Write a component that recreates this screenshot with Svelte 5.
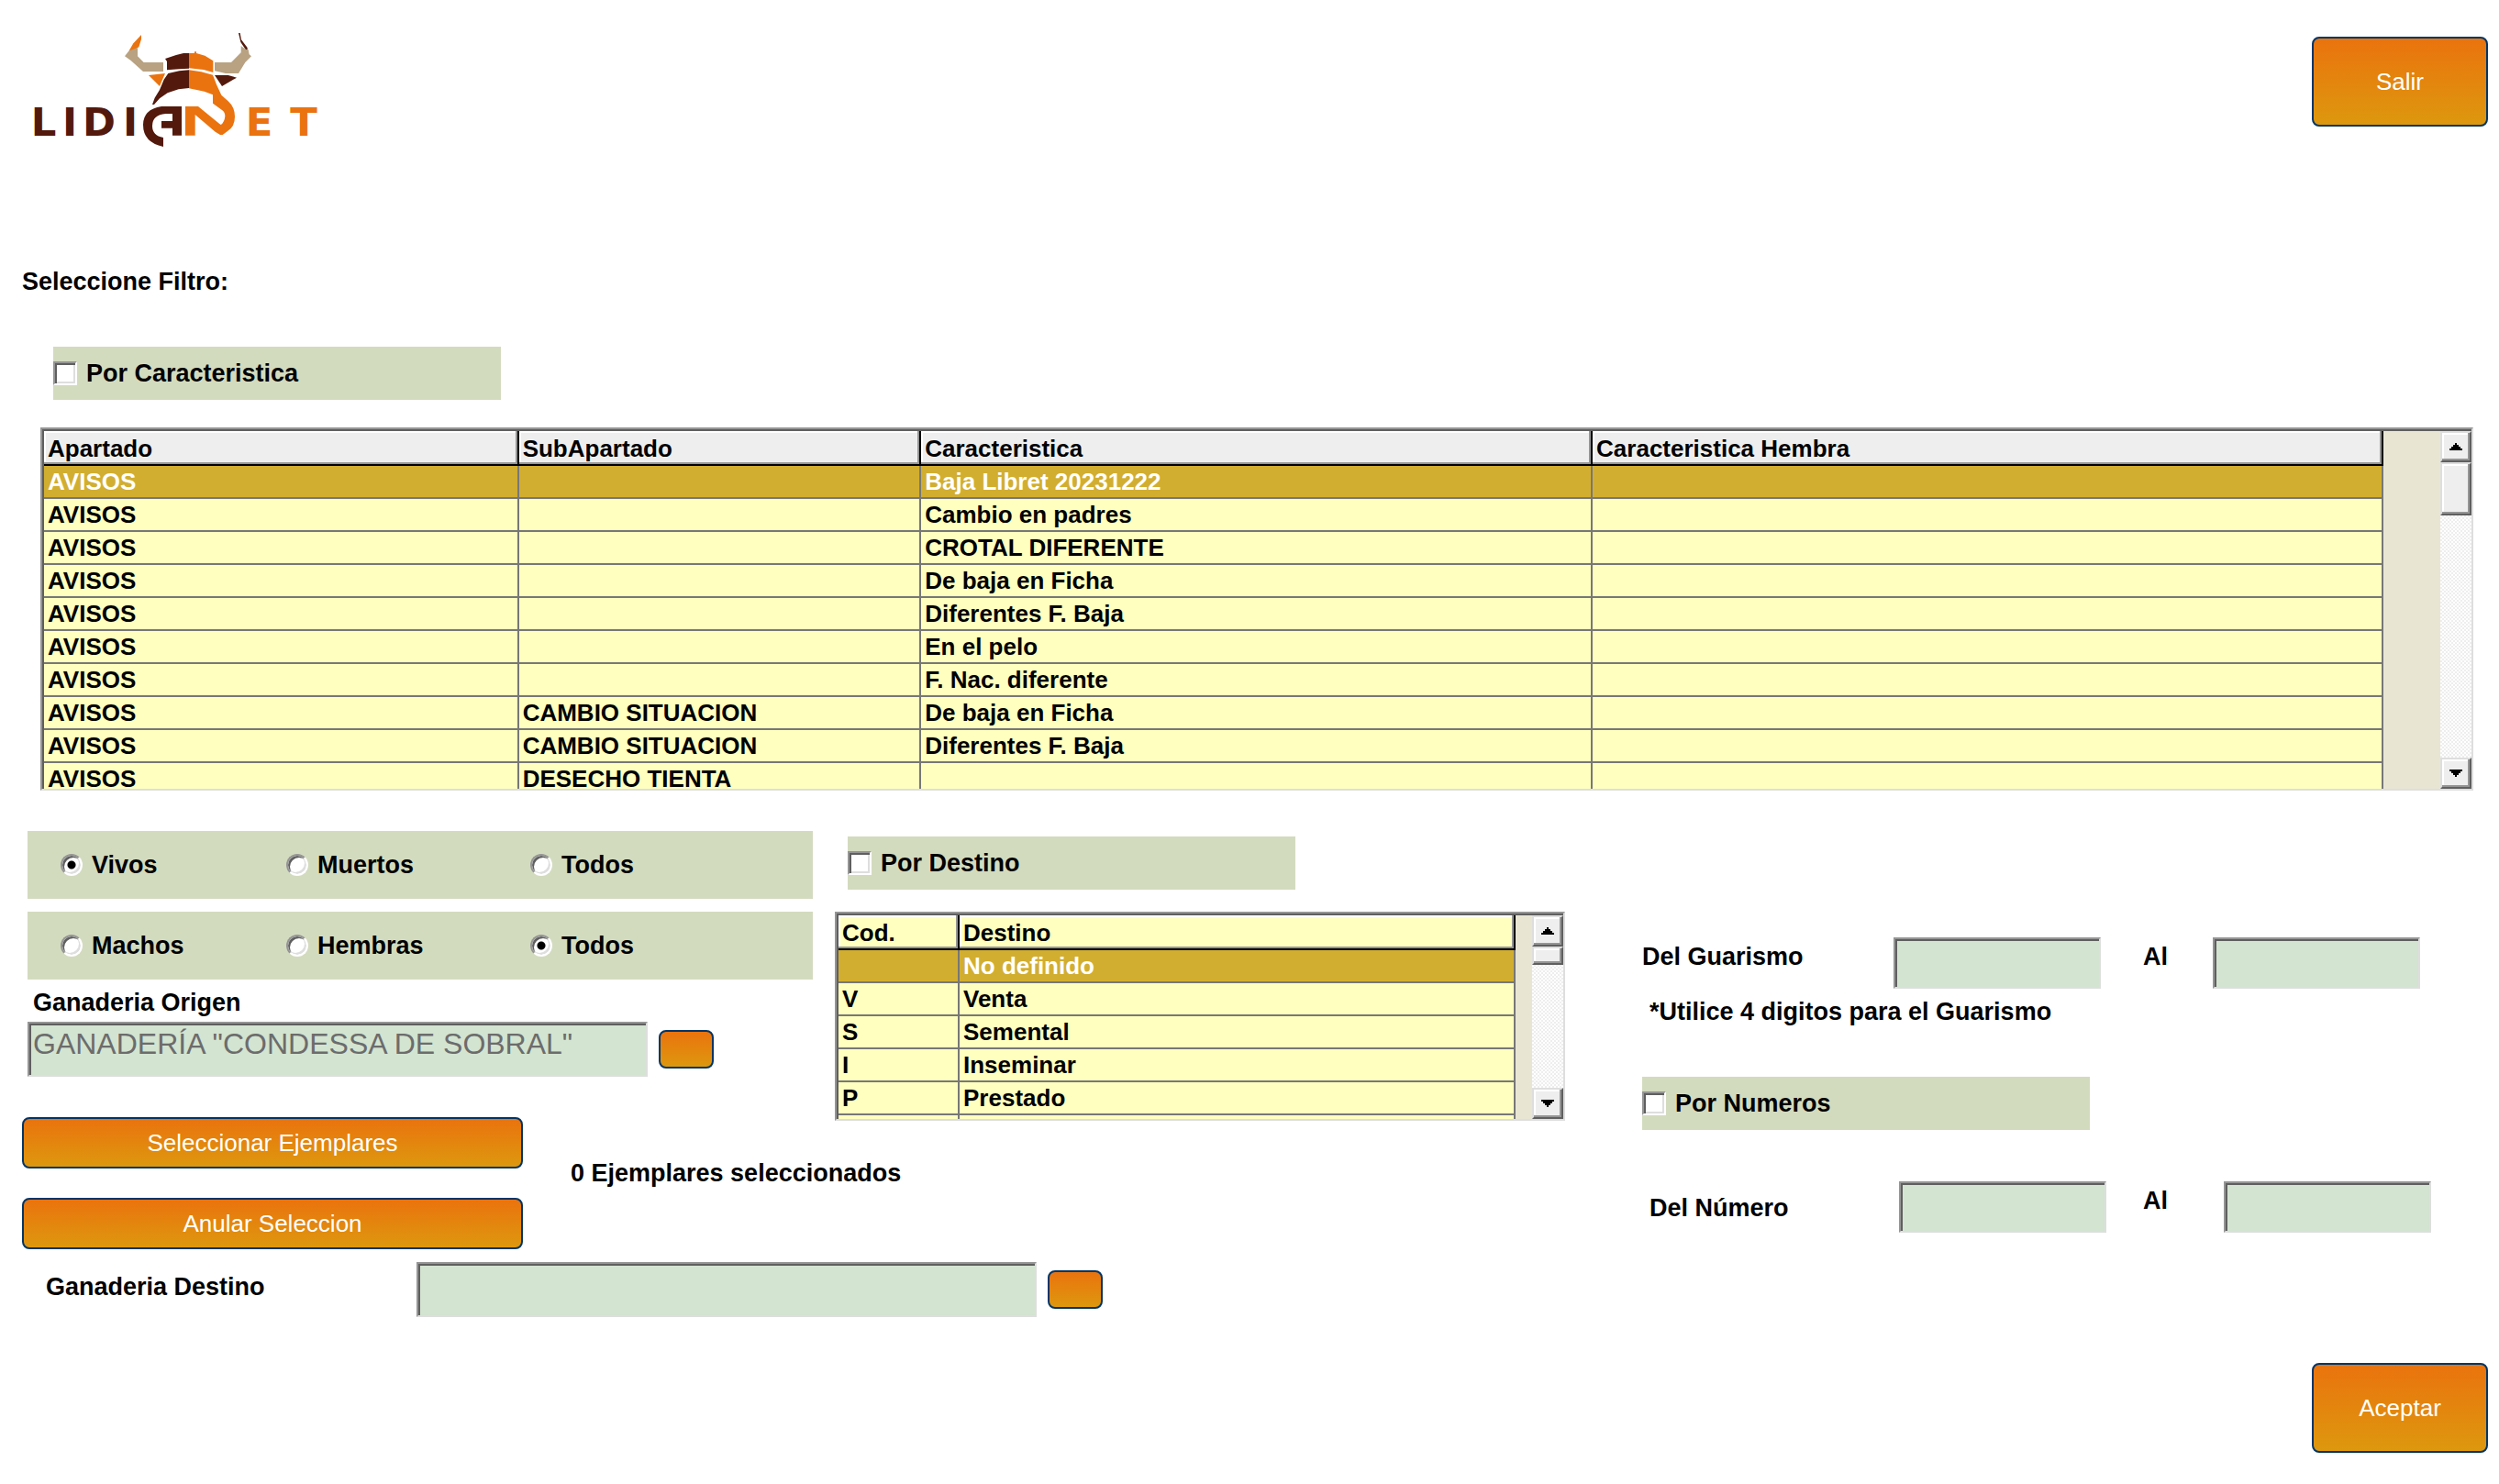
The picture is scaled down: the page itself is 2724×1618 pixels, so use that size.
<script lang="ts">
  const headers = ['Apartado', 'SubApartado', 'Caracteristica', 'Caracteristica Hembra'];
  const rows = [
    ['AVISOS', '', 'Baja Libret 20231222', ''],
    ['AVISOS', '', 'Cambio en padres', ''],
    ['AVISOS', '', 'CROTAL DIFERENTE', ''],
    ['AVISOS', '', 'De baja en Ficha', ''],
    ['AVISOS', '', 'Diferentes F. Baja', ''],
    ['AVISOS', '', 'En el pelo', ''],
    ['AVISOS', '', 'F. Nac. diferente', ''],
    ['AVISOS', 'CAMBIO SITUACION', 'De baja en Ficha', ''],
    ['AVISOS', 'CAMBIO SITUACION', 'Diferentes F. Baja', ''],
    ['AVISOS', 'DESECHO TIENTA', '', '']
  ];
  const destinos = [
    ['', 'No definido'],
    ['V', 'Venta'],
    ['S', 'Semental'],
    ['I', 'Inseminar'],
    ['P', 'Prestado'],
    ['', '']
  ];
  const estados = ['Vivos', 'Muertos', 'Todos'];
  const sexos = ['Machos', 'Hembras', 'Todos'];

  let estado = $state('Vivos');
  let sexo = $state('Todos');
  let selected = $state(0);
  let selectedDestino = $state(0);
</script>

{#snippet scrollbar(thumb: string)}
  <div class="scrollbar">
    <button type="button" class="bevel arrow" aria-label="Subir">
      <svg viewBox="0 0 14 8" width="14" height="8" shape-rendering="crispEdges"><path d="M6 0h2v2h2v2h2v2h2v2H0V6h2V4h2V2h2z" /></svg>
    </button>
    <div class="bevel thumb {thumb}"></div>
    <div class="track"></div>
    <button type="button" class="bevel arrow" aria-label="Bajar">
      <svg viewBox="0 0 14 8" width="14" height="8" shape-rendering="crispEdges"><path d="M0 0h14v2h-2v2h-2v2H8v2H6V6H4V4H2V2H0z" /></svg>
    </button>
  </div>
{/snippet}

<main>
  <header>
    <svg class="logo" viewBox="84 48 978 438" role="img" aria-label="LidiaNet">
      <g class="word">
        <text class="dark" x="101 204 270 402" y="443">LIDI</text>
        <text class="orange" x="803 949" y="443">ET</text>
      </g>
      <path class="orange" d="M462 114v14l-8 26-20 12h-12l14-24z" />
      <path class="sand" d="M422 166l12-4 16-6v28l20 20h64v30h-66l-40-36-20-14z" />
      <path class="dark" d="M780 108h5l4 22 20 26v6h-6l-16-24z" />
      <path class="sand" d="M788 150l16 12h8l3 16 7 6-20 20-22 36h-42l-36-8v-28h54l32-32z" />
      <path class="dark" d="M540 192l36-12 24-6h18v50l-32 2-40 3v-28z" />
      <path class="orange" d="M618 174h18v-5h6v5l28 8 27 17v38l-31-9-48-5z" />
      <path class="dark" d="M550 240l36-8 32-3v59l-34 4-36 12-26 18-18 20h-6l8-22 16-26 14-34z" />
      <path class="orange" d="M618 229l40 6 38 10 12 32 16 34 22 20q22 20 22 50 0 34-24 48l-16 12h-8l-16-10-66-56v68h-32v-95h42l67 55 7 5q12-8 14-28 0-14-10-20l-30-22v-28l-28-11-50-10z" />
      <path class="orange" d="M486 246l54-6-18 42z" />
      <path class="dark" d="M702 246h44l28 8-48 28z" />
      <path class="dark" d="M594 348v95h-30v-24h-36v-23h36v-24h-22q-44 4-44 40 0 32 36 38v30q-66-14-66-72 0-50 60-60z" />
    </svg>
    <button type="button" class="btn large">Salir</button>
  </header>

  <h1>Seleccione Filtro:</h1>

  <div class="filter">
    <label class="check"><input type="checkbox" /> Por Caracteristica</label>
  </div>

  <section class="frame caracteristicas">
    <div class="clip">
      <table>
        <colgroup><col class="c1" /><col class="c2" /><col class="c3" /><col class="c4" /></colgroup>
        <thead>
          <tr>{#each headers as h}<th scope="col">{h}</th>{/each}</tr>
        </thead>
        <tbody>
          {#each rows as row, i}
            <tr class:selected={i === selected} onclick={() => (selected = i)}>
              {#each row as cell}<td>{cell}</td>{/each}
            </tr>
          {/each}
        </tbody>
      </table>
    </div>
    {@render scrollbar('tall')}
  </section>

  <div class="columns">
    <section class="left">
      <div class="panels">
        <div class="radios" role="radiogroup" aria-label="Estado">
          {#each estados as e}
            <label><input type="radio" name="estado" value={e} bind:group={estado} /> {e}</label>
          {/each}
        </div>
        <div class="radios" role="radiogroup" aria-label="Sexo">
          {#each sexos as s}
            <label><input type="radio" name="sexo" value={s} bind:group={sexo} /> {s}</label>
          {/each}
        </div>
      </div>
      <label class="origin-label" for="origen">Ganaderia Origen</label>
      <div class="lookup">
        <input id="origen" class="box wide" type="text" value={'GANADERÍA "CONDESSA DE SOBRAL"'} readonly />
        <button type="button" class="btn mini" aria-label="Buscar ganaderia origen"></button>
      </div>
      <div class="actions">
        <div class="stack">
          <button type="button" class="btn">Seleccionar Ejemplares</button>
          <button type="button" class="btn">Anular Seleccion</button>
        </div>
        <p>0 Ejemplares seleccionados</p>
      </div>
    </section>

    <section class="middle">
      <label class="check"><input type="checkbox" /> Por Destino</label>
      <div class="frame destinos">
        <div class="clip">
          <table>
            <colgroup><col class="code" /><col /></colgroup>
            <thead>
              <tr><th scope="col">Cod.</th><th scope="col">Destino</th></tr>
            </thead>
            <tbody>
              {#each destinos as row, i}
                <tr class:selected={i === selectedDestino} onclick={() => (selectedDestino = i)}>
                  {#each row as cell}<td>{cell}</td>{/each}
                </tr>
              {/each}
            </tbody>
          </table>
        </div>
        {@render scrollbar('short')}
      </div>
    </section>

    <section class="right">
      <div class="range guarismo">
        <label for="g1">Del Guarismo</label>
        <input id="g1" class="box" type="text" />
        <label for="g2">Al</label>
        <input id="g2" class="box" type="text" />
      </div>
      <p class="note">*Utilice 4 digitos para el Guarismo</p>
      <label class="check"><input type="checkbox" /> Por Numeros</label>
      <div class="range numero">
        <label class="lead" for="n1">Del Número</label>
        <input id="n1" class="box" type="text" />
        <label for="n2">Al</label>
        <input id="n2" class="box" type="text" />
      </div>
    </section>
  </div>

  <div class="target">
    <label for="destino">Ganaderia Destino</label>
    <div class="lookup">
      <input id="destino" class="box wide" type="text" />
      <button type="button" class="btn mini" aria-label="Buscar ganaderia destino"></button>
    </div>
  </div>

  <footer>
    <button type="button" class="btn large">Aceptar</button>
  </footer>
</main>

<style>
  :global(body) {
    margin: 0;
    background: #fff;
  }
  main {
    font: bold 27px/30px 'Liberation Sans', Arial, sans-serif;
    color: #000;
  }
  h1,
  p {
    margin: 0;
    font: inherit;
  }

  header {
    display: flex;
    justify-content: space-between;
    align-items: center;
    padding: 16px 12px 0 28px;
  }
  .logo {
    width: 326px;
    height: 146px;
  }
  .word {
    font-family: 'DejaVu Sans', sans-serif;
    font-size: 130px;
    font-weight: bold;
  }
  .dark {
    fill: #53190c;
  }
  .orange {
    fill: #ea730f;
  }
  .sand {
    fill: #b8a282;
  }

  .btn {
    box-sizing: border-box;
    height: 56px;
    padding: 0 8px;
    border: 2px solid #003567;
    border-radius: 8px;
    background: linear-gradient(#ea730e, #dd980e);
    color: #fff;
    font: 26px/30px 'Liberation Sans', Arial, sans-serif;
  }
  .large {
    width: 192px;
    height: 98px;
  }
  .mini {
    width: 60px;
    height: 42px;
    padding: 0;
  }

  h1 {
    padding: 130px 24px 56px;
  }
  .filter {
    padding: 0 58px 30px;
  }
  .check {
    display: flex;
    align-items: center;
    gap: 10px;
    box-sizing: border-box;
    width: 488px;
    height: 58px;
    background: #d3dbbf;
  }
  input[type='checkbox'],
  input[type='radio'] {
    appearance: none;
    box-sizing: border-box;
    margin: 0;
    border: 2px solid;
    border-color: #959595 #fff #fff #959595;
    background: #fff;
    box-shadow:
      inset 2px 2px #5f5f5f,
      inset -2px -2px #dedede;
  }
  input[type='checkbox'] {
    width: 26px;
    height: 26px;
  }
  input[type='checkbox']:checked {
    background: #fff linear-gradient(#000, #000) center / 10px 10px no-repeat;
  }
  input[type='radio'] {
    width: 24px;
    height: 24px;
    border-radius: 50%;
  }
  input[type='radio']:checked {
    background: #fff radial-gradient(circle, #000 4px, #fff 5px);
  }

  .frame {
    display: flex;
    box-sizing: border-box;
    border: 2px solid;
    border-color: #959595 #dedede #dedede #959595;
    background: #e8e5d3;
    padding: 2px 0 0 2px;
    box-shadow: inset 2px 2px #5f5f5f;
  }
  .caracteristicas {
    height: 396px;
    margin: 0 28px 44px 44px;
  }
  .destinos {
    width: 796px;
    height: 228px;
  }
  .clip {
    flex: 1;
    overflow: hidden;
  }
  .caracteristicas .clip {
    margin-right: 62px;
  }
  .destinos .clip {
    margin-right: 18px;
  }
  table {
    width: 100%;
    table-layout: fixed;
    border-collapse: separate;
    border-spacing: 0;
    font-size: 26px;
    line-height: 34px;
  }
  .c1 {
    width: 20.3%;
  }
  .c2 {
    width: 17.2%;
  }
  .c3 {
    width: 28.7%;
  }
  .c4 {
    width: 33.8%;
  }
  .code {
    width: 132px;
  }
  th {
    box-sizing: border-box;
    height: 38px;
    padding: 2px 4px 0;
    border: solid #000;
    border-width: 0 2px 2px 0;
    background: #eee;
    box-shadow:
      inset -2px -2px #959595,
      inset 2px 2px #fff;
    text-align: left;
    font-weight: bold;
  }
  .destinos th {
    background: #ffffbf;
  }
  td {
    box-sizing: border-box;
    height: 36px;
    padding: 0 4px;
    border: solid #777;
    border-width: 0 2px 2px 0;
    background: #ffffbf;
    white-space: nowrap;
  }
  .selected td {
    background: #d2ae30;
    color: #fff;
  }

  .scrollbar {
    display: flex;
    flex-direction: column;
    width: 34px;
  }
  .bevel {
    box-sizing: border-box;
    border: 2px solid;
    border-color: #dedede #5f5f5f #5f5f5f #dedede;
    background: #eee;
    box-shadow:
      inset -2px -2px #959595,
      inset 2px 2px #fff;
  }
  .arrow {
    display: grid;
    place-items: center;
    width: 34px;
    height: 34px;
    padding: 0;
  }
  .tall {
    height: 58px;
  }
  .short {
    height: 20px;
  }
  .track {
    flex: 1;
    background: repeating-conic-gradient(#eee 0 25%, #fff 0 50%) 0 0 / 4px 4px;
  }

  .columns {
    display: grid;
    grid-template-columns: minmax(0, 910fr) minmax(0, 880fr) minmax(0, 934fr);
  }
  .left {
    padding-left: 30px;
  }
  .panels {
    display: grid;
    gap: 14px;
    margin-right: 24px;
  }
  .radios {
    display: grid;
    grid-template-columns: 246px 266px auto;
    align-items: center;
    height: 74px;
    padding-left: 36px;
    background: #d3dbbf;
  }
  .radios label {
    display: flex;
    align-items: center;
    gap: 10px;
  }
  .origin-label {
    display: block;
    padding: 10px 6px 6px;
  }
  .lookup {
    display: flex;
    align-items: center;
    gap: 12px;
  }
  .box {
    box-sizing: border-box;
    width: 226px;
    height: 56px;
    padding: 4px 4px 12px;
    border: 2px solid;
    border-color: #959595 #dedede #dedede #959595;
    border-radius: 0;
    outline: 0;
    background: #d3e4d1;
    box-shadow: inset 2px 2px #5f5f5f;
    color: #6c6c6c;
    font: 32px/36px 'Liberation Sans', Arial, sans-serif;
  }
  .wide {
    width: 676px;
    height: 60px;
    padding-bottom: 16px;
  }
  .actions {
    display: flex;
    gap: 52px;
    margin: 44px 0 0 -6px;
    white-space: nowrap;
  }
  .stack {
    display: grid;
    flex: none;
    gap: 32px;
    width: 546px;
  }
  .actions p {
    padding-top: 46px;
  }

  .middle {
    padding-top: 6px;
  }
  .middle .check {
    margin: 0 0 24px 14px;
  }

  .right {
    padding-top: 116px;
  }
  .range {
    display: grid;
    align-items: start;
  }
  .range label {
    padding-top: 6px;
  }
  .range .lead {
    padding: 14px 0 0 8px;
  }
  .guarismo {
    grid-template-columns: 274px 272px 76px 226px;
  }
  .numero {
    grid-template-columns: 280px 266px 88px 226px;
    margin-top: 56px;
  }
  .note {
    padding: 10px 8px 56px;
  }

  .target {
    display: flex;
    padding: 14px 0 50px 50px;
  }
  .target > label {
    width: 404px;
    padding-top: 12px;
  }
  footer {
    display: flex;
    justify-content: flex-end;
    padding: 0 12px 34px;
  }
</style>
